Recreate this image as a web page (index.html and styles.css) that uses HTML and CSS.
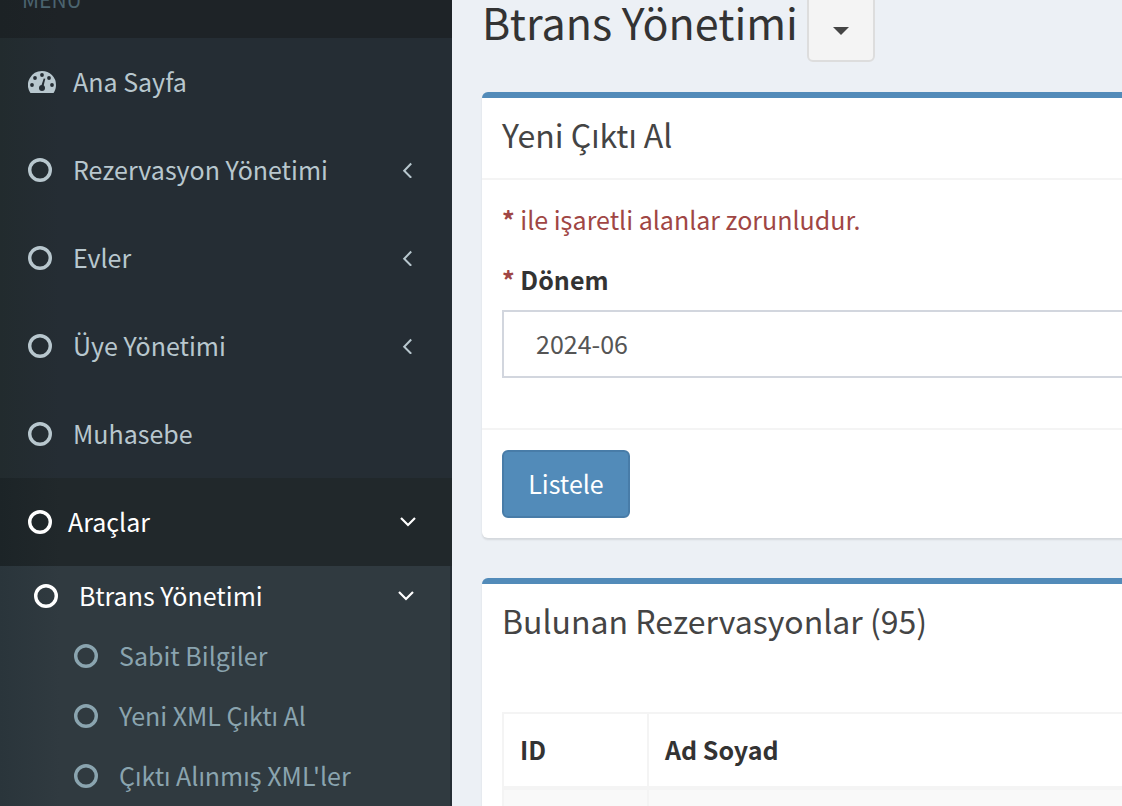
FILE: index.html
```
<!DOCTYPE html>
<html lang="tr">
<head>
<meta charset="utf-8">
<title>Btrans Yönetimi</title>
<link rel="stylesheet" href="styles.css">
</head>
<body>
<svg class="sprite" aria-hidden="true">
  <symbol id="circle" viewBox="0 0 24 24"><circle cx="12" cy="12" r="10.300" fill="none" stroke="currentColor" stroke-width="3.400"/></symbol>
  <symbol id="left" viewBox="0 0 16 16"><path d="M11.200 1.500 4.200 8.800l7 7" fill="none" stroke="currentColor" stroke-width="2"/></symbol>
  <symbol id="down" viewBox="0 0 16 16"><path d="M1 4 8 11l7-7" fill="none" stroke="currentColor" stroke-width="2.200"/></symbol>
</svg>
<div class="page">
  <aside class="sidebar">
    <div class="menu-header">MENÜ</div>
    <nav>
      <ul class="menu">
        <li><a class="item home" href="#"><svg class="gauge" viewBox="0 0 28 22"><path fill="currentColor" d="M14 0a14 14 0 0 1 14 14c0 2.700-.7 5.200-2.100 7.400-.2.400-.6.600-1 .6H3.100c-.4 0-.8-.2-1-.6A14 14 0 0 1 14 0Z"/><g class="dial"><circle cx="4" cy="14" r="1.900"/><circle cx="7" cy="7" r="1.900"/><circle cx="14" cy="4" r="1.900"/><circle cx="21" cy="7" r="1.900"/><circle cx="24" cy="14" r="1.900"/><circle cx="14" cy="17" r="3"/><path d="m15.700 7.400 1.600.4-1.800 7.500-2.200-.5Z"/></g></svg><span>Ana Sayfa</span></a></li>
        <li><a class="item" href="#"><svg class="ring"><use href="#circle"/></svg><span>Rezervasyon Yönetimi</span><svg class="arrow"><use href="#left"/></svg></a></li>
        <li><a class="item" href="#"><svg class="ring"><use href="#circle"/></svg><span>Evler</span><svg class="arrow"><use href="#left"/></svg></a></li>
        <li><a class="item" href="#"><svg class="ring"><use href="#circle"/></svg><span>Üye Yönetimi</span><svg class="arrow"><use href="#left"/></svg></a></li>
        <li><a class="item" href="#"><svg class="ring"><use href="#circle"/></svg><span>Muhasebe</span></a></li>
        <li>
          <a class="item active" href="#"><svg class="ring"><use href="#circle"/></svg><span>Araçlar</span><svg class="arrow"><use href="#down"/></svg></a>
          <ul class="submenu">
            <li>
              <a class="subitem open" href="#"><svg class="ring"><use href="#circle"/></svg><span>Btrans Yönetimi</span><svg class="arrow"><use href="#down"/></svg></a>
              <ul class="leafs">
                <li><a class="subitem leaf" href="#"><svg class="ring"><use href="#circle"/></svg><span>Sabit Bilgiler</span></a></li>
                <li><a class="subitem leaf" href="#"><svg class="ring"><use href="#circle"/></svg><span>Yeni XML Çıktı Al</span></a></li>
                <li><a class="subitem leaf" href="#"><svg class="ring"><use href="#circle"/></svg><span>Çıktı Alınmış XML'ler</span></a></li>
              </ul>
            </li>
          </ul>
        </li>
      </ul>
    </nav>
  </aside>
  <main class="content">
    <header class="title-bar">
      <h1>Btrans Yönetimi</h1>
      <button class="toggle" type="button" aria-label="Menüyü aç"><svg class="caret" viewBox="0 0 16 8"><path fill="currentColor" d="M0 0h16L8 8Z"/></svg></button>
    </header>
    <form class="box">
      <h2>Yeni Çıktı Al</h2>
      <div class="fields">
        <p class="note"><b>*</b> ile işaretli alanlar zorunludur.</p>
        <label for="period"><span class="star">*</span> Dönem</label>
        <select id="period"><option>2024-06</option></select>
      </div>
      <div class="actions"><button class="primary" type="button">Listele</button></div>
    </form>
    <section class="box results">
      <h2>Bulunan Rezervasyonlar (95)</h2>
      <table>
        <thead><tr><th class="id">ID</th><th>Ad Soyad</th></tr></thead>
        <tbody><tr><td></td><td></td></tr></tbody>
      </table>
    </section>
  </main>
</div>
</body>
</html>
```
FILE: styles.css
```
* { box-sizing: border-box; }
body {
  margin: 0;
  background: #ecf0f5;
  color: #333;
  font: 25px/38px "Noto Sans CJK SC", "Noto Sans", sans-serif;
}
h1, h2, p, ul { margin: 0; padding: 0; font-weight: 400; }
ul { list-style: none; }
a { color: inherit; text-decoration: none; }
button, select { font: inherit; }
.sprite { position: absolute; width: 0; height: 0; }
.page { display: flex; height: 100vh; overflow: hidden; }

.sidebar {
  flex: 0 0 452px;
  background: linear-gradient(90deg, #222b2e, #252d34 60px);
  color: #b8c7ce;
}
.menu-header {
  margin-top: -20px;
  padding: 0 22px 20px;
  background: linear-gradient(90deg, #1c2225, #1e2327 60px);
  color: #4b646f;
  font-size: 21px;
}
.item { display: flex; align-items: center; gap: 21px; padding: 24px 36px 24px 28px; }
.item span, .subitem span { padding-bottom: 2px; }
.home { gap: 17px; }
.ring { flex: none; width: 24px; height: 24px; }
.gauge { flex: none; width: 28px; height: 22px; }
.dial { fill: #252d34; }
.arrow { flex: none; width: 16px; height: 16px; margin-left: auto; }
.active { gap: 16px; background: linear-gradient(90deg, #1c2427, #21282b 60px); color: #fff; }
.submenu {
  margin-right: 2px;
  background: linear-gradient(90deg, #2a353b, #303a40 60px);
}
.subitem { display: flex; align-items: center; gap: 21px; padding: 10px 36px 10px 34px; }
.open { color: #fff; }
.leaf { padding-left: 74px; color: #8aa4af; }

.content { flex: 1; min-width: 0; padding-left: 30px; }
.title-bar { display: flex; align-items: flex-start; gap: 9px; margin-top: -6px; padding-bottom: 30px; }
h1 { font-size: 43px; line-height: 54px; }
.toggle {
  display: flex;
  align-items: center;
  justify-content: center;
  width: 68px;
  height: 68px;
  padding: 6px 0 0;
  border: 2px solid #ddd;
  border-radius: 6px;
  background: #f4f4f4;
  color: #444;
}
.caret { width: 16px; height: 8px; }
.box {
  margin: 0 -24px 40px 0;
  border-top: 6px solid #528bb9;
  border-radius: 6px;
  background: #fff;
  box-shadow: 0 2px 2px rgba(0, 0, 0, .1);
}
h2 { padding: 20px 20px 28px; color: #444; font-size: 32px; line-height: 32px; }
.fields { padding: 20px 20px 50px; border: solid #f4f4f4; border-width: 2px 0; }
.note { padding-bottom: 22px; color: #a04644; }
label { display: block; padding-bottom: 12px; font-weight: 700; }
.star { color: #a04644; }
select {
  display: block;
  width: 100%;
  height: 68px;
  padding: 0 32px 2px;
  border: 2px solid #d2d6de;
  border-radius: 0;
  appearance: none;
  background: #fff;
  color: #555;
}
.actions { padding: 20px; }
.primary {
  display: block;
  min-width: 128px;
  padding: 12px 24px 14px;
  border: 2px solid #487ca8;
  border-radius: 6px;
  background: #528bb9;
  color: #fff;
}
.results { padding-bottom: 20px; }
.results h2 { padding-bottom: 76px; }
table { width: calc(100% - 20px); margin-left: 20px; border-collapse: separate; border-spacing: 0; border: 2px solid #f4f4f4; border-width: 2px 0 0 2px; }
th, td { padding: 16px 16px 18px; border-right: 2px solid #f4f4f4; text-align: left; }
th { border-bottom: 4px solid #f4f4f4; }
td { height: 76px; background: #f9f9f9; }
.id { width: 145px; }
```
